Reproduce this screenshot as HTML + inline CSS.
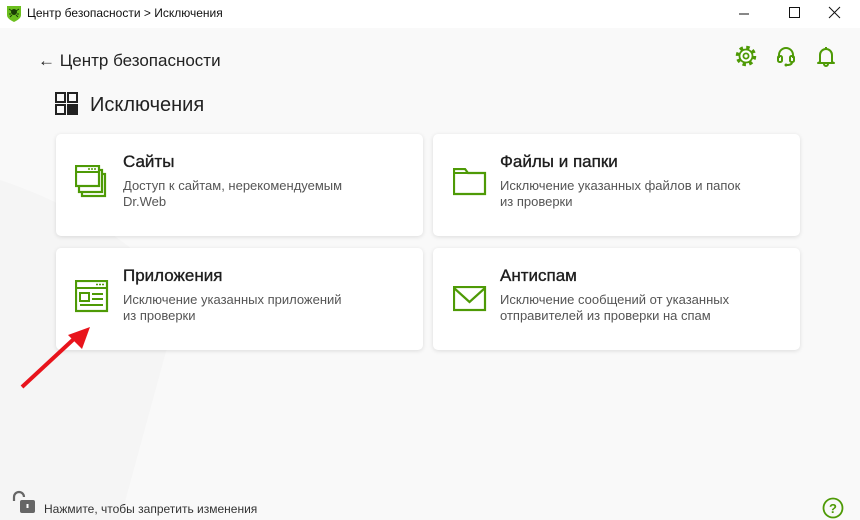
<!DOCTYPE html>
<html><head><meta charset="utf-8"><style>
*{margin:0;padding:0;box-sizing:border-box}
body{width:860px;height:520px;background:#f9f9f9;font-family:"Liberation Sans",sans-serif;position:relative;overflow:hidden;color:#222}
.tb{position:absolute;left:0;top:0;width:860px;height:28px;background:#fff}
.tb .t{position:absolute;left:27px;top:6px;font-size:12px;color:#111}
.card{position:absolute;width:367px;height:102px;background:#fff;border-radius:5px;box-shadow:0 1px 4px rgba(0,0,0,.12)}
.card h3{position:absolute;left:67px;top:18px;font-size:17px;font-weight:normal;color:#1e1e1e;-webkit-text-stroke:.35px #1e1e1e}
.card p{position:absolute;left:67px;top:44px;font-size:13px;line-height:16px;color:#555;white-space:nowrap}
.card svg{position:absolute}
</style></head><body>
<div class="tb">
<svg style="position:absolute;left:6px;top:5px" width="16" height="17" viewBox="0 0 16 17"><path d="M1 1h14v9c0 3-3 5-7 7-4-2-7-4-7-7z" fill="#6cbf1f"/><circle cx="8" cy="7" r="3" fill="#1a3d06"/><path d="M3 4l3 2M13 4l-3 2M3 9h2M11 9h2M4 12l2-2M12 12l-2-2" stroke="#1a3d06" stroke-width="1"/></svg>
<div class="t">Центр безопасности &gt; Исключения</div>
<svg style="position:absolute;left:736px;top:6px" width="16" height="16"><path d="M3 8h10" stroke="#111"/></svg>
<svg style="position:absolute;left:786px;top:5px" width="16" height="16"><rect x="3.5" y="2.5" width="10" height="10" fill="none" stroke="#111"/></svg>
<svg style="position:absolute;left:826px;top:5px" width="16" height="16"><path d="M3 2l11 11M14 2L3 13" stroke="#111"/></svg>
</div>
<svg style="position:absolute;left:0;top:140px" width="260" height="380"><path d="M0 40C60 60 140 100 180 160 L120 380H0z" fill="#f2f2f2" opacity=".6"/></svg>
<div style="position:absolute;left:38px;top:51px;font-size:17px;color:#222">← Центр безопасности</div>
<svg style="position:absolute;left:55px;top:92px" width="24" height="24"><rect x="1" y="1" width="9" height="9" fill="none" stroke="#222" stroke-width="2"/><rect x="13" y="1" width="9" height="9" fill="none" stroke="#222" stroke-width="2"/><rect x="1" y="13" width="9" height="9" fill="none" stroke="#222" stroke-width="2"/><rect x="12" y="12" width="11" height="11" fill="#222"/></svg>
<div style="position:absolute;left:90px;top:94px;font-size:20px;color:#222">Исключения</div>
<svg style="position:absolute;left:735px;top:45px" width="22" height="22" viewBox="0 0 22 22"><circle cx="11" cy="11" r="8.5" fill="none" stroke="#4e9a06" stroke-width="3.5" stroke-dasharray="3.4 3.27"/><circle cx="11" cy="11" r="6.5" fill="#fff" stroke="#4e9a06" stroke-width="1.8"/><circle cx="11" cy="11" r="2.6" fill="none" stroke="#4e9a06" stroke-width="1.8"/></svg>
<svg style="position:absolute;left:775px;top:45px" width="22" height="22"><path d="M4 13V10a7 7 0 0 1 14 0v3" fill="none" stroke="#4e9a06" stroke-width="2"/><rect x="3" y="11" width="4" height="6" rx="1.5" fill="none" stroke="#4e9a06" stroke-width="2"/><rect x="15" y="11" width="4" height="6" rx="1.5" fill="none" stroke="#4e9a06" stroke-width="2"/><path d="M17 17c0 2-2 3-5 3" fill="none" stroke="#4e9a06" stroke-width="2"/><circle cx="11" cy="20" r="1.5" fill="#4e9a06"/></svg>
<svg style="position:absolute;left:815px;top:45px" width="22" height="22"><path d="M5 17V10a6 6 0 0 1 12 0v7l2 1H3z" fill="none" stroke="#4e9a06" stroke-width="2" stroke-linejoin="round"/><path d="M11 2v2M9 19a2 2 0 0 0 4 0" fill="none" stroke="#4e9a06" stroke-width="2"/></svg>

<div class="card" style="left:56px;top:134px">
<svg style="left:19px;top:31px" width="32" height="34"><rect x="7" y="9" width="23" height="22" fill="none" stroke="#4e9a06" stroke-width="2.2"/><rect x="4" y="5" width="23" height="22" fill="#fff" stroke="#4e9a06" stroke-width="2.2"/><rect x="1" y="1" width="23" height="20" fill="#fff" stroke="#4e9a06" stroke-width="2.2"/><path d="M1 7h23" stroke="#4e9a06" stroke-width="2"/><path d="M13 4h2M16 4h2M19 4h2" stroke="#4e9a06" stroke-width="1.5"/></svg>
<h3>Сайты</h3><p>Доступ к сайтам, нерекомендуемым<br>Dr.Web</p></div>
<div class="card" style="left:433px;top:134px">
<svg style="left:20px;top:34px" width="34" height="28"><path d="M1 1h11l3 4h17v21H1z" fill="none" stroke="#4e9a06" stroke-width="2.2"/><path d="M1 5h14" stroke="#4e9a06" stroke-width="2"/></svg>
<h3>Файлы и папки</h3><p>Исключение указанных файлов и папок<br>из проверки</p></div>
<div class="card" style="left:56px;top:248px">
<svg style="left:19px;top:32px" width="34" height="34"><rect x="1" y="1" width="31" height="30" fill="none" stroke="#4e9a06" stroke-width="2.2"/><path d="M1 8h31" stroke="#4e9a06" stroke-width="2"/><path d="M21 4.5h2M24 4.5h2M27 4.5h2" stroke="#4e9a06" stroke-width="1.6"/><rect x="5" y="13" width="9" height="8" fill="none" stroke="#4e9a06" stroke-width="2"/><path d="M17 14h11M17 19h11M5 25h23" stroke="#4e9a06" stroke-width="2"/></svg>
<h3>Приложения</h3><p>Исключение указанных приложений<br>из проверки</p></div>
<div class="card" style="left:433px;top:248px">
<svg style="left:20px;top:38px" width="34" height="26"><rect x="1" y="1" width="31" height="23" fill="none" stroke="#4e9a06" stroke-width="2.2"/><path d="M1 2l15.5 14L32 2" fill="none" stroke="#4e9a06" stroke-width="2.2"/></svg>
<h3>Антиспам</h3><p>Исключение сообщений от указанных<br>отправителей из проверки на спам</p></div>

<svg style="position:absolute;left:18px;top:325px" width="80" height="70"><path d="M4 62L58 12" stroke="#e8141c" stroke-width="4"/><path d="M72 2L50 10 64 24z" fill="#e8141c"/></svg>

<svg style="position:absolute;left:10px;top:490px" width="28" height="26"><path d="M4 11V7a5 5 0 0 1 10 0" fill="none" stroke="#666" stroke-width="2.2"/><rect x="10" y="10" width="15" height="13" rx="2" fill="#666"/><rect x="16.5" y="14" width="2" height="4" fill="#fff"/></svg>
<div style="position:absolute;left:44px;top:502px;font-size:12px;color:#333">Нажмите, чтобы запретить изменения</div>
<svg style="position:absolute;left:822px;top:497px" width="22" height="22"><circle cx="11" cy="11" r="9.5" fill="none" stroke="#4e9a06" stroke-width="1.8"/><text x="11" y="16" font-size="13" font-family="Liberation Sans" text-anchor="middle" fill="#4e9a06" font-weight="bold">?</text></svg>
</body></html>
